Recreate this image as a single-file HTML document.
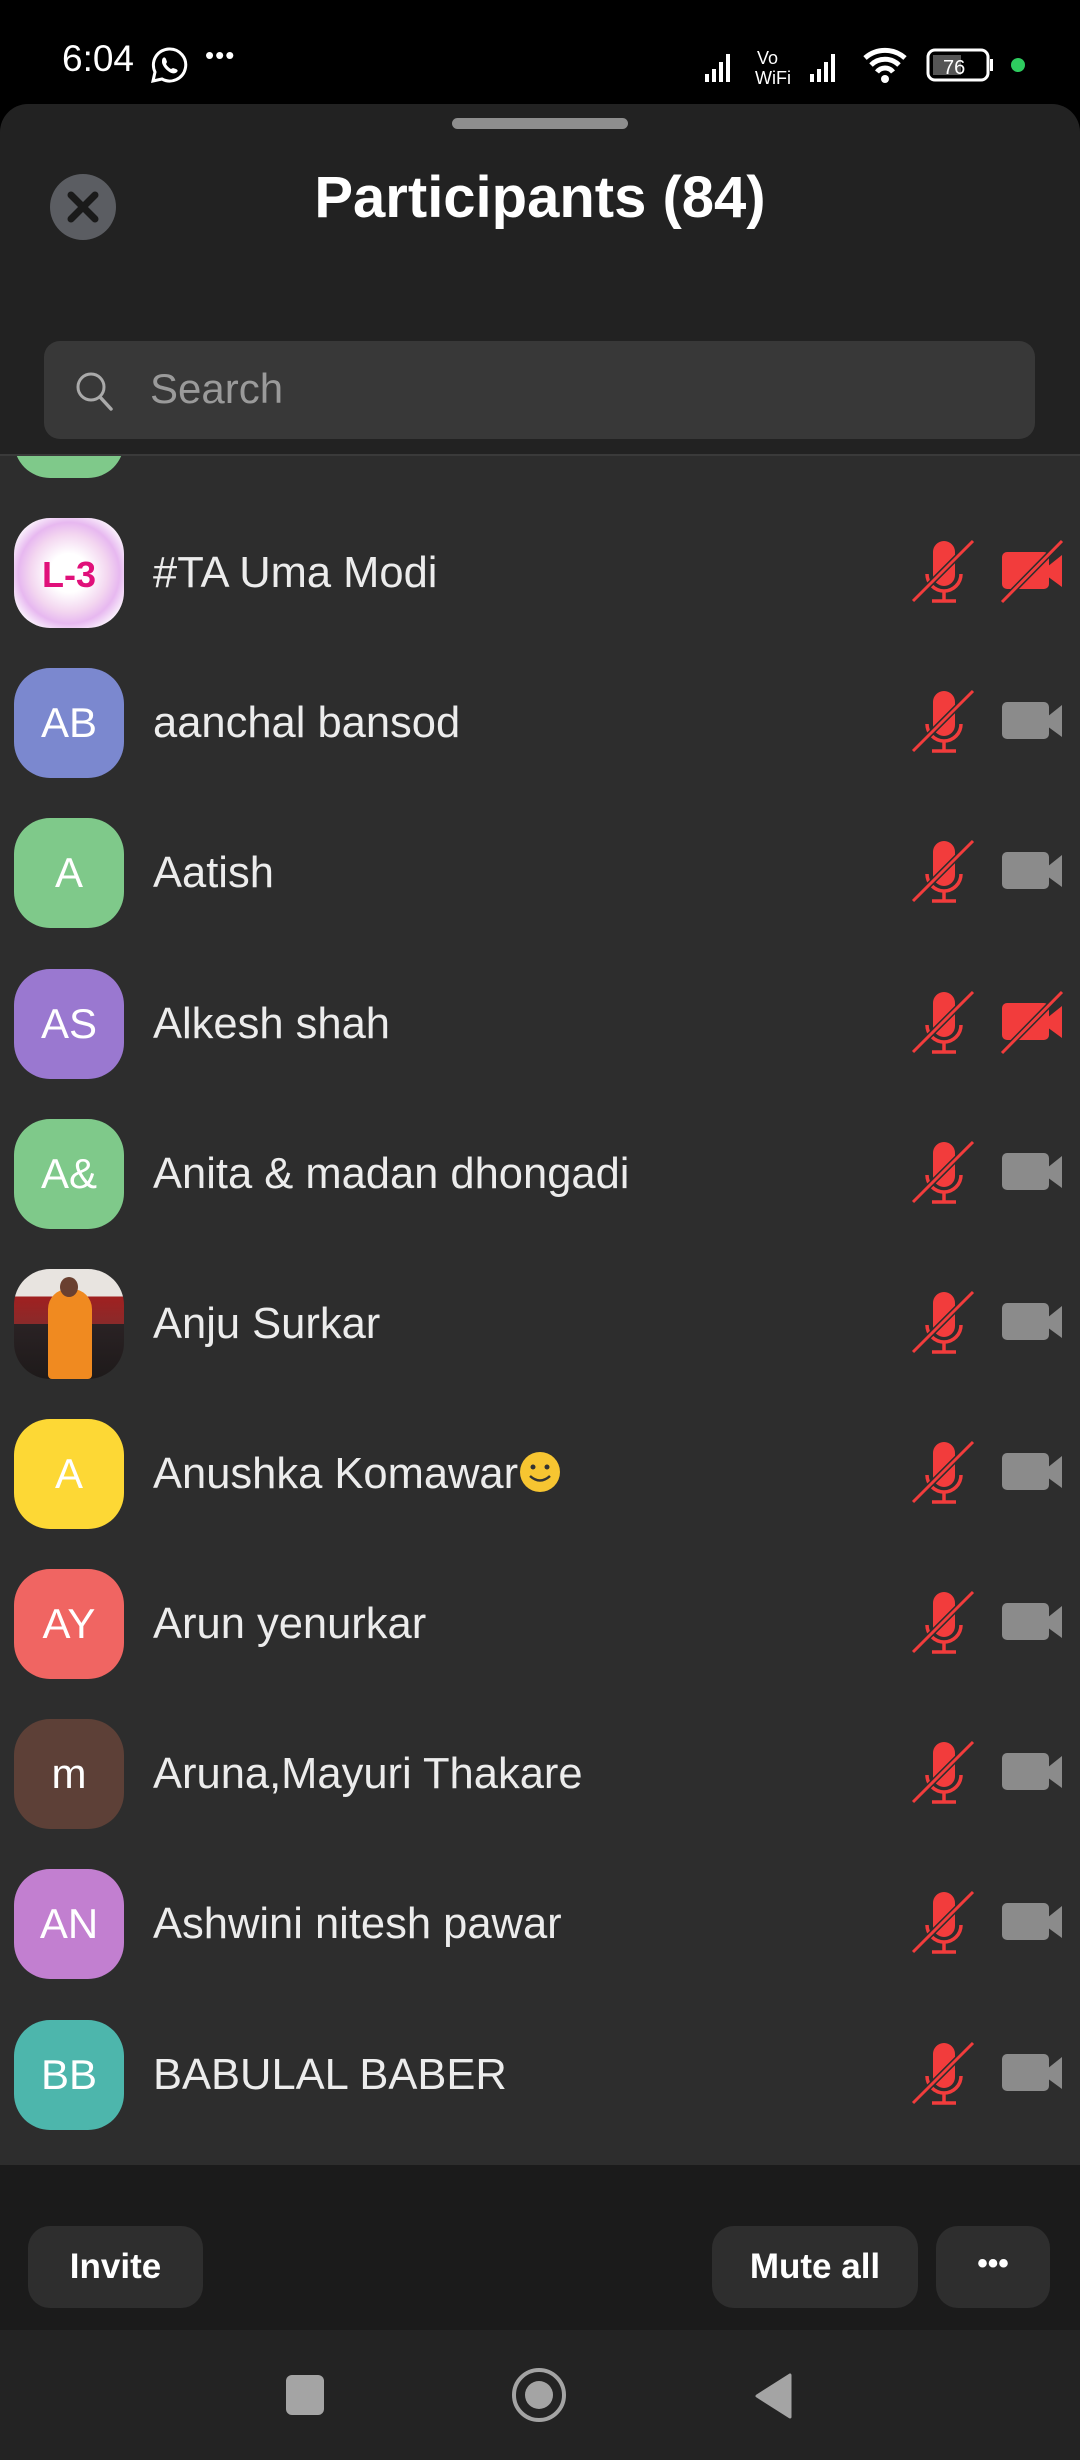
<!DOCTYPE html>
<html><head><meta charset="utf-8"><style>
*{margin:0;padding:0;box-sizing:border-box}
body{width:1080px;height:2460px;background:#000;font-family:"Liberation Sans",sans-serif;position:relative;overflow:hidden;color:#fff}
.abs{position:absolute}
.sheet{left:0;top:104px;width:1080px;height:2226px;background:#222;border-radius:28px 28px 0 0}
.list{left:0;top:456px;width:1080px;height:1709px;background:#2d2d2d;overflow:hidden}
.row{position:absolute;left:0;width:1080px;height:150px}
.av{position:absolute;left:14px;top:20px;width:110px;height:110px;border-radius:36px;color:#fff;font-size:42px;text-align:center;line-height:110px;overflow:hidden}
.nm{position:absolute;left:153px;top:0;line-height:150px;font-size:43.5px;color:#ececec;white-space:nowrap}
.ic{position:absolute;left:890px;top:11px}
.btn{position:absolute;top:2226px;height:82px;background:#2e2e2e;border-radius:22px;font-size:35px;font-weight:bold;color:#fff;text-align:center;line-height:82px}
</style></head><body>
<div class="abs" style="left:62px;top:38px;font-size:37px;color:#fff">6:04</div>
<svg class="abs" style="left:150px;top:46px" width="38" height="38" viewBox="0 0 38 38"><path d="M19 3a16 16 0 0 0-14 23l-2 9 9-2A16 16 0 1 0 19 3z" fill="none" stroke="#fff" stroke-width="3"/><path d="M13 12c1-1 2-1 3 1l1 3-1 2c1 2 3 4 5 5l2-1 3 1c2 1 2 2 1 3-2 2-5 2-9-1s-6-7-6-9c0-2 0-3 1-4z" fill="#fff"/></svg>
<div class="abs" style="left:205px;top:40px;font-size:26px;color:#fff;letter-spacing:1px">•••</div>
<svg class="abs" style="left:700px;top:44px" width="330" height="42" viewBox="0 0 330 42">
<g fill="#fff"><rect x="5" y="30" width="4" height="8"/><rect x="12" y="25" width="4" height="13"/><rect x="19" y="18" width="4" height="20"/><rect x="26" y="10" width="4" height="28"/></g>
<text x="57" y="20" font-size="18" fill="#fff" font-family="Liberation Sans">Vo</text>
<text x="55" y="40" font-size="18" fill="#fff" font-family="Liberation Sans">WiFi</text>
<g fill="#fff"><rect x="110" y="30" width="4" height="8"/><rect x="117" y="25" width="4" height="13"/><rect x="124" y="18" width="4" height="20"/><rect x="131" y="10" width="4" height="28"/></g>
<path d="M165 14a30 30 0 0 1 40 0M171 21a20 20 0 0 1 28 0M177 28a10 10 0 0 1 16 0" stroke="#fff" stroke-width="5" fill="none"/><circle cx="185" cy="35" r="4" fill="#fff"/>
<rect x="228" y="6" width="60" height="30" rx="7" fill="none" stroke="#fff" stroke-width="3"/><rect x="233" y="11" width="28" height="20" fill="#555"/><rect x="290" y="15" width="3" height="12" fill="#fff"/>
<text x="243" y="30" font-size="20" fill="#fff" font-family="Liberation Sans">76</text>
<circle cx="318" cy="21" r="7" fill="#2ecc5f"/></svg>
<div class="abs sheet"></div>
<div class="abs" style="left:452px;top:118px;width:176px;height:11px;border-radius:6px;background:#8e8e8e"></div>
<svg class="abs" style="left:49px;top:173px" width="68" height="68" viewBox="0 0 68 68"><circle cx="34" cy="34" r="33" fill="#5b5d62"/><path d="M22 22L46 46M46 22L22 46" stroke="#1a1a1a" stroke-width="7" stroke-linecap="round"/></svg>
<div class="abs" style="left:0;width:1080px;top:164px;text-align:center;font-size:58px;font-weight:bold;color:#fff">Participants (84)</div>
<div class="abs" style="left:44px;top:341px;width:991px;height:98px;border-radius:16px;background:#383838"></div>
<svg class="abs" style="left:74px;top:370px" width="44" height="44" viewBox="0 0 44 44"><circle cx="17" cy="17" r="13" fill="none" stroke="#aaa" stroke-width="3"/><path d="M26 27l11 12" stroke="#aaa" stroke-width="3.5" stroke-linecap="round"/></svg>
<div class="abs" style="left:150px;top:365px;font-size:42px;color:#9a9a9a">Search</div>
<div class="abs" style="left:0;top:454px;width:1080px;height:2px;background:#3a3a3a"></div>
<div class="abs list">
<svg width="0" height="0" style="position:absolute"><defs>
<g id="mic"><rect x="43" y="32" width="22" height="45" rx="11" fill="#f23c3c"/><path d="M37 65a17 17 0 0 0 34 0" fill="none" stroke="#f23c3c" stroke-width="3.5"/><path d="M54 82v9M42 92h24" stroke="#f23c3c" stroke-width="3.5"/><path d="M23 92L83 32" stroke="#2d2d2d" stroke-width="6"/><path d="M23 92L83 32" stroke="#f23c3c" stroke-width="3"/></g>
<g id="camr"><rect x="112" y="43" width="47" height="37" rx="5" fill="#f23c3c"/><path d="M157 58L172 46V78L157 67Z" fill="#f23c3c"/><path d="M112 93L172 32" stroke="#2d2d2d" stroke-width="6"/><path d="M112 93L172 32" stroke="#f23c3c" stroke-width="3"/></g>
<g id="camg"><rect x="112" y="43" width="47" height="37" rx="5" fill="#8b8b8b"/><path d="M157 58L172 46V78L157 67Z" fill="#8b8b8b"/></g>
</defs></svg>
<div class="row" style="top:-108px"><div class="av" style="background:#7fc98a"></div></div>
<div class="row" style="top:42px"><div class="av" style="background:radial-gradient(circle,#fff 25%,#f3d6f0 50%,#e7b8f0 65%,#fff 85%)"><span style="color:#e0107a;font-weight:bold;font-size:36px">L-3</span></div><div class="nm">#TA Uma Modi</div><svg class="ic" width="190" height="120"><use href="#mic"/><use href="#camr"/></svg></div>
<div class="row" style="top:192px"><div class="av" style="background:#7b88cf">AB</div><div class="nm">aanchal bansod</div><svg class="ic" width="190" height="120"><use href="#mic"/><use href="#camg"/></svg></div>
<div class="row" style="top:342px"><div class="av" style="background:#7fc98a">A</div><div class="nm">Aatish</div><svg class="ic" width="190" height="120"><use href="#mic"/><use href="#camg"/></svg></div>
<div class="row" style="top:493px"><div class="av" style="background:#9a78d0">AS</div><div class="nm">Alkesh shah</div><svg class="ic" width="190" height="120"><use href="#mic"/><use href="#camr"/></svg></div>
<div class="row" style="top:643px"><div class="av" style="background:#7fc98a">A&amp;</div><div class="nm">Anita &amp; madan dhongadi</div><svg class="ic" width="190" height="120"><use href="#mic"/><use href="#camg"/></svg></div>
<div class="row" style="top:793px"><div class="av" style="background:linear-gradient(180deg,#e8e4e0 0,#e8e4e0 25%,#a02020 25%,#8a2a2a 50%,#2a2224 50%,#1e1a1a 100%)"><div style="position:absolute;left:34px;top:20px;width:44px;height:90px;background:#f08a20;border-radius:20px 20px 4px 4px"></div><div style="position:absolute;left:46px;top:8px;width:18px;height:20px;background:#6a4030;border-radius:50%"></div></div><div class="nm">Anju Surkar</div><svg class="ic" width="190" height="120"><use href="#mic"/><use href="#camg"/></svg></div>
<div class="row" style="top:943px"><div class="av" style="background:#fdd835">A</div><div class="nm">Anushka Komawar<svg width="44" height="44" viewBox="0 0 44 44" style="vertical-align:-6px"><circle cx="22" cy="22" r="20" fill="#f7c531"/><circle cx="15" cy="17" r="2.5" fill="#333"/><circle cx="29" cy="17" r="2.5" fill="#333"/><path d="M12 26q10 9 20 0" stroke="#333" stroke-width="2.5" fill="none"/></svg></div><svg class="ic" width="190" height="120"><use href="#mic"/><use href="#camg"/></svg></div>
<div class="row" style="top:1093px"><div class="av" style="background:#f06562">AY</div><div class="nm">Arun yenurkar</div><svg class="ic" width="190" height="120"><use href="#mic"/><use href="#camg"/></svg></div>
<div class="row" style="top:1243px"><div class="av" style="background:#5d4037">m</div><div class="nm">Aruna,Mayuri Thakare</div><svg class="ic" width="190" height="120"><use href="#mic"/><use href="#camg"/></svg></div>
<div class="row" style="top:1393px"><div class="av" style="background:#c27fd0">AN</div><div class="nm">Ashwini nitesh pawar</div><svg class="ic" width="190" height="120"><use href="#mic"/><use href="#camg"/></svg></div>
<div class="row" style="top:1544px"><div class="av" style="background:#4db6ac">BB</div><div class="nm">BABULAL BABER</div><svg class="ic" width="190" height="120"><use href="#mic"/><use href="#camg"/></svg></div>
</div>
<div class="abs" style="left:0;top:2165px;width:1080px;height:165px;background:#1b1b1b"></div>
<div class="btn" style="left:28px;width:175px">Invite</div>
<div class="btn" style="left:712px;width:206px">Mute all</div>
<div class="btn" style="left:936px;width:114px;font-size:30px;line-height:76px">•••</div>
<div class="abs" style="left:0;top:2330px;width:1080px;height:130px;background:#232323"></div>
<div class="abs" style="left:286px;top:2375px;width:38px;height:40px;border-radius:6px;background:#a4a4a4"></div>
<svg class="abs" style="left:510px;top:2366px" width="58" height="58" viewBox="0 0 58 58"><ellipse cx="29" cy="29" rx="25" ry="25" fill="none" stroke="#a4a4a4" stroke-width="4"/><circle cx="29" cy="29" r="14" fill="#a4a4a4"/></svg>
<svg class="abs" style="left:752px;top:2372px" width="42" height="48" viewBox="0 0 42 48"><path d="M38 3V45L5 24Z" fill="#a4a4a4" stroke="#a4a4a4" stroke-width="3" stroke-linejoin="round"/></svg>
</body></html>
